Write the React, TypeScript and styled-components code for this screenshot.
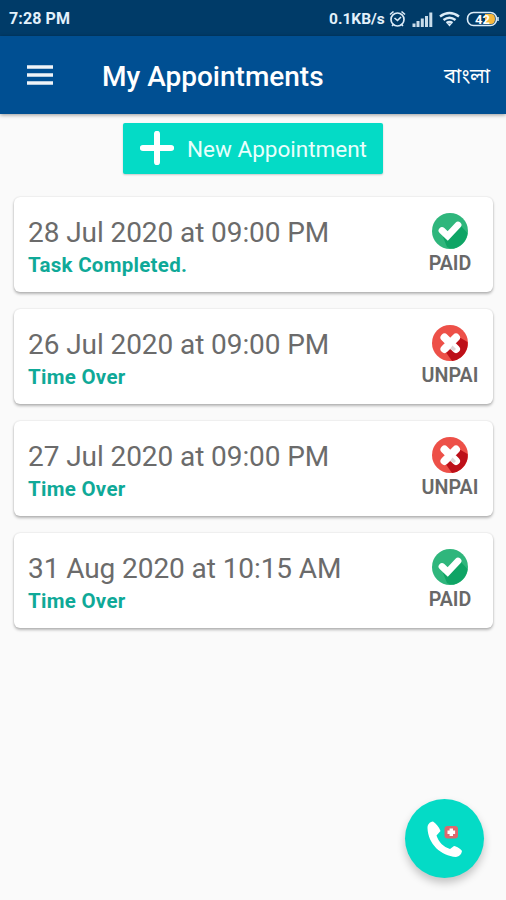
import React from "react";
import styled, { createGlobalStyle } from "styled-components";

const GlobalStyle = createGlobalStyle`
  * { box-sizing: border-box; }
  body { margin: 0; background: #fafafa; font-family: Roboto, sans-serif; }
`;

const Screen = styled.div`
  position: relative;
  width: 506px;
  height: 900px;
  overflow: hidden;
  background: #fafafa;
`;

const StatusBar = styled.div`
  height: 36px;
  padding: 1px 7px 0 9px;
  display: flex;
  align-items: center;
  justify-content: space-between;
  background: #003b68;
  color: #e3f1fb;
  font-size: 16px;
  font-weight: 700;
`;

const Clock = styled.span`
  letter-spacing: 0.1px;
`;

const StatusIcons = styled.div`
  display: flex;
  align-items: center;
  font-size: 15.5px;
  svg { display: block; }
`;

const Speed = styled.span`
  width: 58px;
  white-space: nowrap;
`;

const AppBar = styled.header`
  height: 78px;
  padding: 0 16px 0 27px;
  display: flex;
  align-items: center;
  background: #004f92;
  color: #fff;
  box-shadow: 0 1px 4px rgba(0, 0, 0, 0.4);
`;

const MenuButton = styled.button`
  width: 26px;
  height: 20px;
  padding: 0;
  border: 0;
  background: none;
  svg { display: block; }
`;

const Title = styled.h1`
  flex: 1;
  margin: 2px 0 0 49px;
  font-size: 28px;
  font-weight: 500;
  white-space: nowrap;
`;

const Language = styled.span`
  margin-top: 6px;
  font: 400 20px/24px "Noto Sans Bengali", "Noto Sans", Roboto, sans-serif;
`;

const Content = styled.main`
  padding: 9px 13px 0 14px;
  display: flex;
  flex-direction: column;
`;

const NewButton = styled.button`
  align-self: center;
  width: 260px;
  height: 51px;
  margin: 0 1px 23px 0;
  padding: 0 0 0 17px;
  display: flex;
  align-items: center;
  gap: 13px;
  border: 0;
  border-radius: 2px;
  background: #04dbc6;
  color: #e9fffc;
  font: 400 22.5px Roboto, sans-serif;
  white-space: nowrap;
  box-shadow: 0 1px 2px rgba(0, 0, 0, 0.2);
  svg { margin-top: -1px; }
`;

const List = styled.div`
  display: flex;
  flex-direction: column;
  gap: 17px;
`;

const Card = styled.article`
  height: 95px;
  padding: 0 14px;
  display: flex;
  justify-content: space-between;
  border-radius: 6px;
  background: #fff;
  box-shadow: 0 2px 3px rgba(0, 0, 0, 0.27), 0 0 2px rgba(0, 0, 0, 0.14);
`;

const Details = styled.div`
  padding-top: 18px;
`;

const DateText = styled.div`
  font-size: 28px;
  line-height: 35px;
  letter-spacing: -0.08px;
  color: #6b6b6b;
  white-space: nowrap;
`;

const Note = styled.div`
  font-size: 20.5px;
  line-height: 31px;
  font-weight: 700;
  letter-spacing: 0.28px;
  color: #0fa998;
`;

const Payment = styled.div`
  width: 58px;
  padding-top: 16px;
  display: flex;
  flex-direction: column;
  align-items: center;
  svg { display: block; }
`;

const PaymentLabel = styled.span`
  margin-top: 2px;
  font-size: 19.7px;
  line-height: 25px;
  font-weight: 600;
  color: #686868;
`;

const CallButton = styled.button`
  position: absolute;
  left: 405px;
  top: 799px;
  width: 79px;
  height: 79px;
  padding: 0;
  border: 0;
  border-radius: 50%;
  background: #04dbc6;
  box-shadow: 0 5px 8px rgba(0, 0, 0, 0.22);
  svg { display: block; }
`;

const PaidIcon = () => (
  <svg width="36" height="36" viewBox="0 0 36 36">
    <circle cx="18" cy="18" r="18" fill="#2fb67c" />
    <path d="M11 24L15 34Q18 36 22 35.500A18 18 0 0 0 35.500 20L28 12Z" fill="#0fa465" />
    <path d="M10 17.500L15.700 23L26 12" fill="none" stroke="#fff" strokeWidth="6.800" strokeLinecap="round" />
  </svg>
);

const UnpaidIcon = () => (
  <svg width="36" height="36" viewBox="0 0 36 36">
    <circle cx="18" cy="18" r="18" fill="#ed5048" />
    <path d="M13 26L20 36A18 18 0 0 0 35 23.500Q36 20 35.500 17L27 12Z" fill="#bd1019" />
    <path d="M12.500 12.500L24 24M24 12.500L12.500 24" stroke="#fff" strokeWidth="8" strokeLinecap="round" />
    <path d="M18 24L20.500 20.500L24 24L22 26Z" fill="#ded7d8" />
  </svg>
);

const appointments = [
  { date: "28 Jul 2020 at 09:00 PM", note: "Task Completed.", paid: true },
  { date: "26 Jul 2020 at 09:00 PM", note: "Time Over", paid: false },
  { date: "27 Jul 2020 at 09:00 PM", note: "Time Over", paid: false },
  { date: "31 Aug 2020 at 10:15 AM", note: "Time Over", paid: true },
];

export default function App() {
  return (
    <Screen>
      <GlobalStyle />
      <StatusBar>
        <Clock>7:28 PM</Clock>
        <StatusIcons>
          <Speed>0.1KB/s</Speed>
          <svg width="112" height="20" viewBox="387 8 112 20" fill="none" stroke="#dcecf8">
            <circle cx="397.500" cy="18.500" r="6.500" strokeWidth="1.700" />
            <path d="M390 13.500L393.500 10.500M405 13.500L401.500 10.500M392 25L394 23M403 25L401 23M394.500 17L397.500 19.500L401 16" strokeWidth="1.600" />
            <path d="M414 22.500V26M418 20V26M422.300 17.500V26M426.500 15V26M430.800 11.500V26" strokeWidth="3" stroke="#c9dcea" />
            <path d="M440 15.500Q449.500 8.500 459 15.500M443.500 19Q449.500 14.500 455.500 19M446.500 22Q449.500 20 452.500 22" strokeWidth="2.400" />
            <path d="M447 22.500H452L449.500 25.500Z" fill="#dcecf8" stroke="none" />
            <path d="M485 13H491Q495 13 495 18Q495 23 491 23H485Z" fill="#f8b83c" stroke="none" />
            <rect x="467.500" y="11.500" width="29" height="13" rx="6" strokeWidth="1.600" />
            <path d="M498 16V20" strokeWidth="1.500" />
            <text x="475" y="22.500" fill="#fff" stroke="none" fontSize="13" fontWeight="700" fontFamily="Roboto, sans-serif">42</text>
          </svg>
        </StatusIcons>
      </StatusBar>
      <AppBar>
        <MenuButton aria-label="Menu">
          <svg width="26" height="20" viewBox="0 0 26 20">
            <path d="M0 2H26M0 10H26M0 18H26" stroke="#f0f4f8" strokeWidth="3.600" />
          </svg>
        </MenuButton>
        <Title>My Appointments</Title>
        <Language>বাংলা</Language>
      </AppBar>
      <Content>
        <NewButton>
          <svg width="34" height="34" viewBox="0 0 34 34">
            <path d="M17 2.800V31.200M2.800 17H31.200" stroke="#fff" strokeWidth="6" strokeLinecap="round" />
          </svg>
          New Appointment
        </NewButton>
        <List>
          {appointments.map((a) => (
            <Card key={a.date}>
              <Details>
                <DateText>{a.date}</DateText>
                <Note>{a.note}</Note>
              </Details>
              <Payment>
                {a.paid ? <PaidIcon /> : <UnpaidIcon />}
                <PaymentLabel>{a.paid ? "PAID" : "UNPAI"}</PaymentLabel>
              </Payment>
            </Card>
          ))}
        </List>
      </Content>
      <CallButton aria-label="Call">
        <svg width="79" height="79" viewBox="0 0 79 79">
          <path d="M28 22.500C24.500 23 22.500 25.500 22.500 29C23 45 36 57 51 58C54.500 57.500 56.500 55 57 52C56 50 52 47.500 49 47L45 50C38.500 48 33.500 43 31.500 36.500L35.500 32C34 28 31 24.500 28 22.500Z" fill="#fff" />
          <rect x="39.500" y="27" width="13.500" height="12.500" rx="3" fill="#dc686e" />
          <path d="M46.300 29.500V37M42.500 33.200H50.100" stroke="#fff" strokeWidth="3.400" />
        </svg>
      </CallButton>
    </Screen>
  );
}
